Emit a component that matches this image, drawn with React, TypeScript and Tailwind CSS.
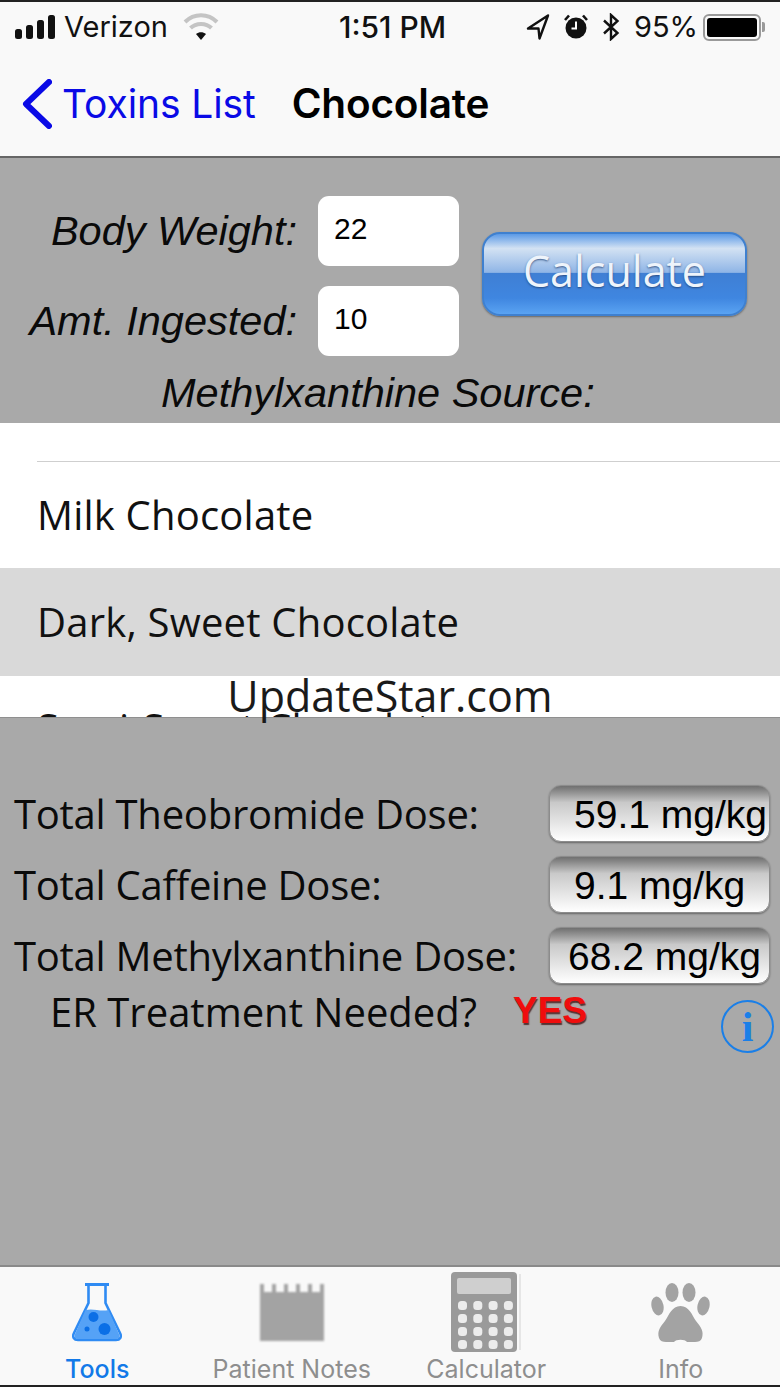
import React from 'react';

const sans = "font-['Liberation_Sans',Arial,sans-serif]";

// Signal bars next to the carrier name
const SignalIcon = () => (
  <svg width="41" height="24" viewBox="0 0 41 24" fill="#111">
    <rect x="0" y="14" width="7" height="10" rx="2.5" />
    <rect x="11" y="10" width="7" height="14" rx="2.5" />
    <rect x="22" y="5" width="7" height="19" rx="2.5" />
    <rect x="33" y="0" width="7" height="24" rx="2.5" />
  </svg>
);

const WifiIcon = () => (
  <svg width="36" height="28" viewBox="0 0 36 28" fill="none" strokeLinecap="butt">
    <path d="M2 9 C11 0 25 0 34 9" stroke="#c4c4c4" strokeWidth="4" />
    <path d="M7.5 15 C13 9.5 23 9.5 28.5 15" stroke="#c4c4c4" strokeWidth="4" />
    <path d="M13 21 L18 27 L23 21 C20 18.5 16 18.5 13 21 Z" fill="#111" />
  </svg>
);

const LocationIcon = () => (
  <svg width="24" height="26" viewBox="0 0 24 26" fill="none">
    <path d="M22 1.5 L2 14.5 L12.5 14.5 L13.5 24.5 Z" stroke="#111" strokeWidth="2.4" strokeLinejoin="round" />
  </svg>
);

const AlarmIcon = () => (
  <svg width="24" height="26" viewBox="0 0 24 26">
    <circle cx="12" cy="14" r="10.5" fill="#111" />
    <path d="M12 7.5 V14.5 H7.5" stroke="#fff" strokeWidth="2" fill="none" />
    <path d="M1 6 L5 1.5 M23 6 L19 1.5" stroke="#111" strokeWidth="2.6" />
  </svg>
);

const BluetoothIcon = () => (
  <svg width="18" height="28" viewBox="0 0 18 28" fill="none">
    <path d="M2 7.5 L15.5 20 L9 26 V2 L15.5 8 L2 20.5" stroke="#111" strokeWidth="2.4" strokeLinejoin="miter" />
  </svg>
);

const BatteryIcon = () => (
  <div className="flex items-center">
    <div className="w-[58px] h-[27px] rounded-[6px] border-2 border-[#9a9a9a] p-[2px]">
      <div className="w-full h-full rounded-[3px] bg-black" />
    </div>
    <div className="w-[3px] h-[10px] rounded-r-[2px] bg-[#9a9a9a] ml-[1px]" />
  </div>
);

const FlaskIcon = () => (
  <svg width="50" height="59" viewBox="0 0 50 59" fill="none">
    <path d="M16.5 3 V20 L2 50 C0 54 2 57 6 57 H44 C48 57 50 54 48 50 L33.5 20 V3" stroke="#2f8bf3" strokeWidth="2.6" />
    <path d="M13 1.5 H37" stroke="#2f8bf3" strokeWidth="3" />
    <path d="M13.5 27 C22 25 28 29 36.5 27 L47 51 C48 54 47 56 44 56 H6 C3 56 2 54 3 51 Z" fill="#55a2f6" />
    <circle cx="21.5" cy="34" r="5" fill="#0b6fe6" />
    <circle cx="32.5" cy="46" r="6" fill="#0b6fe6" />
    <circle cx="15" cy="46" r="2.5" fill="#0b6fe6" />
  </svg>
);

const NotepadIcon = () => (
  <svg width="64" height="57" viewBox="0 0 64 57" className="blur-[1px]">
    <path d="M0 0 H4 V8 H12 V0 H16 V8 H24 V0 H28 V8 H36 V0 H40 V8 H48 V0 H52 V8 H60 V0 H64 V57 H0 Z" fill="#a3a3a3" />
  </svg>
);

const CalculatorIcon = () => {
  const keys = [];
  for (let r = 0; r < 4; r++) {
    for (let c = 0; c < 4; c++) {
      keys.push(<rect key={`${r}-${c}`} x={7 + c * 15.3} y={29 + r * 13} width="9" height="9" rx="3.5" fill="#ececec" />);
    }
  }
  return (
    <svg width="70" height="80" viewBox="0 0 70 80" className="blur-[0.6px]">
      <rect x="0" y="0" width="66" height="80" rx="4" fill="#9a9a9a" />
      <rect x="68" y="2" width="2" height="76" fill="#e6e6e6" />
      <rect x="6" y="6" width="54" height="16" rx="2" fill="#cfcfcf" />
      {keys}
    </svg>
  );
};

const PawIcon = () => (
  <svg width="59" height="59" viewBox="0 0 59 59" fill="#a3a3a3" className="blur-[0.6px]">
    <ellipse cx="6.5" cy="23" rx="6" ry="9.5" transform="rotate(-12 6.5 23)" />
    <ellipse cx="21" cy="9.5" rx="6.5" ry="9.5" />
    <ellipse cx="38" cy="9.5" rx="6.5" ry="9.5" />
    <ellipse cx="52.5" cy="23" rx="6" ry="9.5" transform="rotate(12 52.5 23)" />
    <path d="M29.5 23 C38 23 41 32 45 38 C50 44 53 48 51 55 C50 58 47 59 44 59 H36 C34 56 25 56 23 59 H15 C12 59 9 58 8 55 C6 48 9 44 14 38 C18 32 21 23 29.5 23 Z" />
  </svg>
);

const InputBox = ({ value }: { value: string }) => (
  <div className={`w-[141px] h-[70px] rounded-[11px] bg-white flex items-center pl-[16px] pb-[6px] text-[30px] text-black ${sans}`}>
    {value}
  </div>
);

const WeightLabel = ({ children }: { children: React.ReactNode }) => (
  <span className={`w-[297px] text-right italic text-[41.5px] leading-[50px] text-[#0a0a0a] ${sans}`}>{children}</span>
);

const DoseRow = ({ label, value, valueClass, mt }: { label: string; value: string; valueClass: string; mt: string }) => (
  <div className={`flex items-center justify-between h-[57px] pl-[14px] pr-[10px] ${mt}`}>
    <span className="font-['Open_Sans',sans-serif] text-[40px] tracking-[-0.25px] text-[#0a0a0a]">{label}</span>
    <div
      className={`w-[221px] h-[57px] rounded-[12px] border border-[#8c8c8c] bg-gradient-to-b from-[#707070] via-[#c9c9c9] via-30% to-white shadow-[0_1px_2px_rgba(0,0,0,0.4)] flex items-center pt-[3px] text-[39px] text-black ${sans} ${valueClass}`}
    >
      {value}
    </div>
  </div>
);

const tabs = [
  { label: 'Tools', icon: <FlaskIcon />, active: true },
  { label: 'Patient Notes', icon: <NotepadIcon /> },
  { label: 'Calculator', icon: <CalculatorIcon /> },
  { label: 'Info', icon: <PawIcon /> },
];

export default function App() {
  return (
    <div className="relative w-[780px] h-[1387px] overflow-hidden bg-white flex flex-col">
      {/* Status bar + nav */}
      <div className="bg-[#f9f9f9] border-t-2 border-[#222] h-[158px] border-b-2 border-b-[#666] shrink-0">
        <div className="flex items-center h-[50px] pl-[15px] text-[29px] text-[#111] font-[Inter,sans-serif]">
          <SignalIcon />
          <span className="ml-[8px] w-[103px]">Verizon</span>
          <span className="ml-[16px]"><WifiIcon /></span>
          <span className="ml-[120px] w-[112px] text-[30px] font-medium whitespace-nowrap">1:51 PM</span>
          <span className="ml-[75px]"><LocationIcon /></span>
          <span className="ml-[14px]"><AlarmIcon /></span>
          <span className="ml-[14px]"><BluetoothIcon /></span>
          <span className="ml-[14px] w-[62px]">95%</span>
          <span className="ml-[7px]"><BatteryIcon /></span>
        </div>
        <div className="flex items-center h-[104px] pl-[22px] font-[Inter,sans-serif]">
          <svg width="30" height="50" viewBox="0 0 30 50" fill="none">
            <path d="M27 3 L4 25 L27 47" stroke="#0a0ae6" strokeWidth="6" strokeLinecap="round" strokeLinejoin="round" />
          </svg>
          <span className="ml-[10px] text-[#0a0ae6] text-[39px] tracking-[-0.1px]">Toxins List</span>
          <span className="ml-[36px] text-black text-[40.5px] font-semibold tracking-[-0.2px]">Chocolate</span>
        </div>
      </div>

      {/* Inputs */}
      <div className="bg-[#a9a9a9] h-[265px] shrink-0 pt-[38px]">
        <div className="flex items-center">
          <div className="flex flex-col gap-[20px]">
            <div className="flex items-center gap-[21px]">
              <WeightLabel>Body Weight:</WeightLabel>
              <InputBox value="22" />
            </div>
            <div className="flex items-center gap-[21px]">
              <WeightLabel>Amt. Ingested:</WeightLabel>
              <InputBox value="10" />
            </div>
          </div>
          <div className="ml-[23px] -mt-[4px] w-[265px] h-[84px] rounded-[18px] border-2 border-[#3f80cf] bg-[linear-gradient(to_bottom,#5c9ae6_0%,#d3e2f3_18%,#8fb5e6_48%,#3f7fd4_49%,#3f86e0_80%,#5aa3f2_100%)] shadow-[0_1px_2px_rgba(0,0,0,0.4)] flex items-center justify-center pb-[6px]">
            <span className="font-['Open_Sans',sans-serif] text-[43px] leading-[56px] text-[#eef4fb] [text-shadow:0_1px_2px_rgba(30,60,110,0.8)]">Calculate</span>
          </div>
        </div>
        <div className={`mt-[12px] pl-[161px] italic text-[41.5px] leading-[50px] text-[#0a0a0a] ${sans}`}>Methylxanthine Source:</div>
      </div>

      {/* Source list, scrolled so the third row is clipped */}
      <div className="h-[294px] shrink-0 overflow-hidden bg-white font-['Open_Sans',sans-serif] text-[40px] tracking-[0.2px] text-[#111]">
        <div className="h-[39px] ml-[37px] border-b border-[#cfcfcf]" />
        <div className="h-[106px] flex items-center pl-[37px]">Milk Chocolate</div>
        <div className="h-[108px] flex items-center pl-[37px] bg-[#d9d9d9]">Dark, Sweet Chocolate</div>
        <div className="h-[104px] flex items-center pl-[37px]">Semi-Sweet Chocolate</div>
      </div>

      {/* Results */}
      <div className="flex-1 bg-[#a9a9a9] border-t border-[#8f8f8f] pt-[67px]">
        <DoseRow label="Total Theobromide Dose:" value="59.1 mg/kg" valueClass="pl-[24px]" mt="" />
        <DoseRow label="Total Caffeine Dose:" value="9.1 mg/kg" valueClass="pl-[24px]" mt="mt-[14px]" />
        <DoseRow label="Total Methylxanthine Dose:" value="68.2 mg/kg" valueClass="pl-[18px]" mt="mt-[14px]" />
        <div className="flex items-start pl-[50px] pr-[6px] mt-[1px]">
          <span className="font-['Open_Sans',sans-serif] text-[40px] leading-[54px] text-[#0a0a0a]">ER Treatment Needed?</span>
          <span className={`ml-[36px] mt-[1px] font-bold text-[37px] leading-[50px] text-[#f00d0d] [text-shadow:1px_2px_1px_rgba(50,0,0,0.7)] ${sans}`}>YES</span>
          <div className="ml-auto mt-[15px] w-[53px] h-[53px] rounded-full border-2 border-[#1a7fe8] flex items-center justify-center font-['Liberation_Serif',serif] font-bold text-[42px] leading-none text-[#1a7fe8]">
            i
          </div>
        </div>
      </div>

      {/* Tab bar */}
      <div className="h-[122px] shrink-0 bg-[#f9f9f9] border-t-2 border-[#8a8a8a] border-b-2 border-b-[#222] grid grid-cols-4 pr-[2px] font-[Inter,sans-serif] text-[25px]">
        {tabs.map((tab) => (
          <div key={tab.label} className="relative flex flex-col items-center">
            <div className="h-[84px] pt-[6px] flex items-center justify-center">{tab.icon}</div>
            <span className={tab.active ? 'text-[#1279e8] font-medium' : 'text-[#8e8e8e]'}>{tab.label}</span>
          </div>
        ))}
      </div>

      {/* Watermark over the page */}
      <div className="absolute left-0 right-0 top-[664px] text-center font-['Open_Sans',sans-serif] text-[43px] text-[#1a1a1a]">
        UpdateStar.com
      </div>
    </div>
  );
}
